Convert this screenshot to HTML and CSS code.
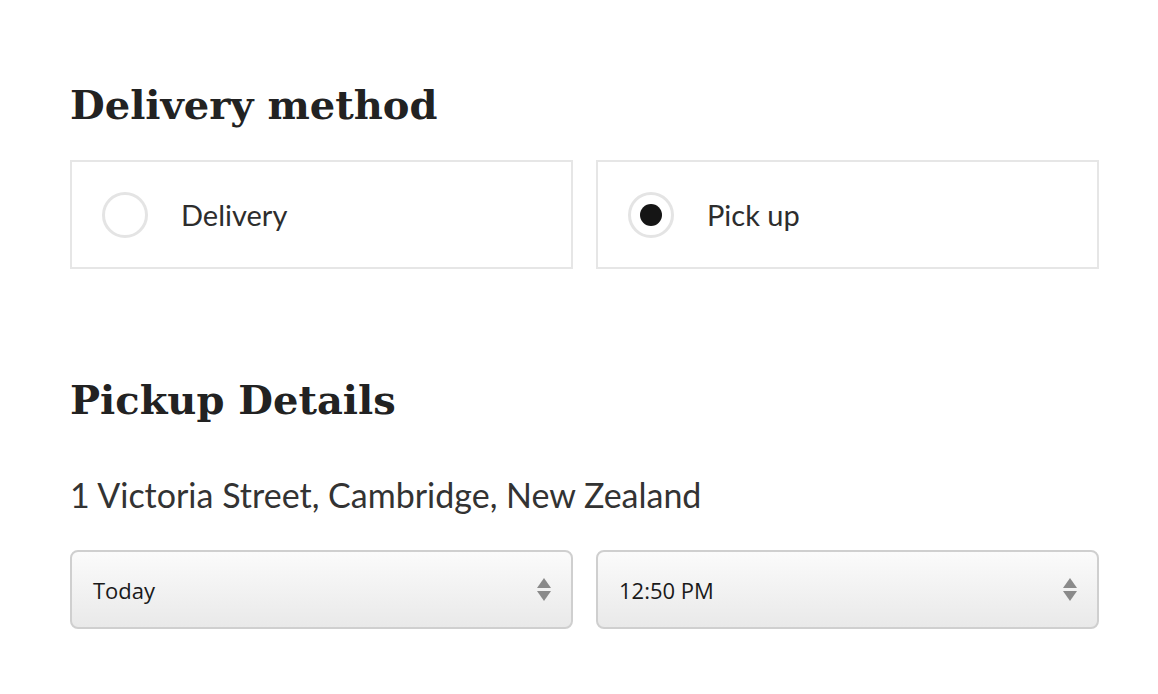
FILE: index.html
```html
<!DOCTYPE html>
<html>
<head>
<meta charset="utf-8">
<link rel="stylesheet" href="styles.css">
</head>
<body>
<main class="page">
  <h2 class="heading">Delivery method</h2>
  <div class="options">
    <label class="option">
      <span class="radio"></span>
      <span class="option-label">Delivery</span>
    </label>
    <label class="option">
      <span class="radio checked"><span class="dot"></span></span>
      <span class="option-label">Pick up</span>
    </label>
  </div>
  <h2 class="heading heading-pickup">Pickup Details</h2>
  <p class="address">1 Victoria Street, Cambridge, New Zealand</p>
  <div class="selects">
    <div class="select"><span class="select-text">Today</span><span class="arrows"><span class="up"></span><span class="down"></span></span></div>
    <div class="select"><span class="select-text">12:50 PM</span><span class="arrows"><span class="up"></span><span class="down"></span></span></div>
  </div>
</main>
</body>
</html>
```
FILE: styles.css
```css
html, body {
  margin: 0;
  padding: 0;
  background: #ffffff;
}
.page {
  width: 1029px;
  padding: 78px 0 0 70px;
  font-family: "Lato", "Noto Sans", sans-serif;
  color: #2b2b2b;
}
.heading {
  margin: 0;
  font-family: "DejaVu Serif", serif;
  font-weight: bold;
  font-size: 40px;
  line-height: 54px;
  color: #222222;
}
.options {
  display: grid;
  grid-template-columns: 1fr 1fr;
  gap: 23px;
  margin-top: 28px;
}
.option {
  display: flex;
  align-items: center;
  height: 109px;
  box-sizing: border-box;
  border: 2px solid #e6e6e6;
  padding-left: 30px;
}
.radio {
  width: 46px;
  height: 46px;
  box-sizing: border-box;
  border: 3px solid #e4e4e4;
  border-radius: 50%;
  display: flex;
  align-items: center;
  justify-content: center;
  flex: none;
}
.dot {
  width: 22px;
  height: 22px;
  border-radius: 50%;
  background: #151515;
}
.option-label {
  margin-left: 33px;
  font-size: 29px;
  color: #2d2d2d;
}
.heading-pickup {
  margin-top: 104px;
}
.address {
  margin: 46px 0 0;
  font-size: 34px;
  line-height: 44px;
  color: #333333;
}
.selects {
  display: grid;
  grid-template-columns: 1fr 1fr;
  gap: 23px;
  margin-top: 33px;
}
.select {
  height: 79px;
  box-sizing: border-box;
  border: 2px solid #cfcfcf;
  border-radius: 8px;
  background: linear-gradient(#fbfbfb, #e9e9e9);
  display: flex;
  align-items: center;
  justify-content: space-between;
  padding: 0 20px 0 21px;
}
.select-text {
  font-family: "Open Sans", "Noto Sans", sans-serif;
  font-size: 22px;
  color: #1a1a1a;
}
.arrows {
  display: flex;
  flex-direction: column;
  gap: 3px;
}
.up, .down {
  width: 0;
  height: 0;
  border-left: 7px solid transparent;
  border-right: 7px solid transparent;
}
.up { border-bottom: 10px solid #8a8a8a; }
.down { border-top: 10px solid #8a8a8a; }
```
